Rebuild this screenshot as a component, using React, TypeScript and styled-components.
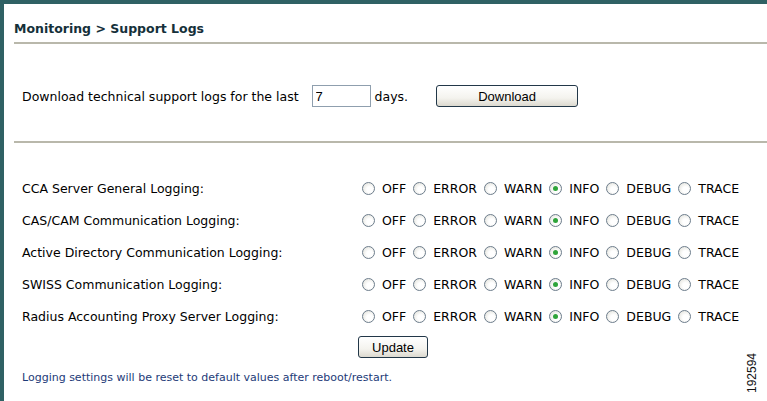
import { useState } from "react";
import styled, { createGlobalStyle } from "styled-components";

const GlobalStyle = createGlobalStyle`
  html, body {
    margin: 0;
    padding: 0;
    background: #ffffff;
  }
  body {
    font-family: "DejaVu Sans", Verdana, sans-serif;
    color: #000;
  }
`;

const LEVELS = ["OFF", "ERROR", "WARN", "INFO", "DEBUG", "TRACE"];

const LOGGERS = [
  "CCA Server General Logging:",
  "CAS/CAM Communication Logging:",
  "Active Directory Communication Logging:",
  "SWISS Communication Logging:",
  "Radius Accounting Proxy Server Logging:",
];

const Page = styled.div`
  position: relative;
  width: 767px;
  height: 401px;
  box-sizing: border-box;
  border-left: 4px solid #2f6164;
  border-top: 4px solid #2f6164;
  overflow: hidden;
`;

const Header = styled.div`
  margin-left: 10px;
  padding-top: 17px;
  padding-bottom: 5px;
  border-bottom: 2px solid #b9b8ab;
`;

const Title = styled.h1`
  margin: 0;
  font-size: 12.5px;
  font-weight: bold;
  color: #15303a;
  line-height: 16px;
`;

const Section = styled.div`
  margin-left: 10px;
  border-bottom: 2px solid #b9b8ab;
  padding: 41px 0 34px 8px;
`;

const DownloadRow = styled.div`
  display: flex;
  align-items: center;
  font-size: 12.5px;
  height: 22px;
`;

const DaysInput = styled.input`
  width: 59px;
  height: 22px;
  box-sizing: border-box;
  margin: 0 4px 0 13px;
  border: 1px solid #8f9fae;
  padding: 1px 3px;
  font-family: "Liberation Sans", Arial, sans-serif;
  font-size: 13px;
  outline: none;
`;

const Button = styled.button<{ $width: number }>`
  width: ${(p) => p.$width}px;
  height: 22px;
  box-sizing: border-box;
  border: 1px solid #223748;
  border-radius: 3px;
  background: linear-gradient(#ffffff, #f4f3ee 60%, #dcd9cf);
  font-family: "Liberation Sans", Arial, sans-serif;
  font-size: 13px;
  color: #000;
  padding: 0;
`;

const DownloadButton = styled(Button)`
  margin-left: 28px;
`;

const Loggers = styled.div`
  margin-left: 10px;
  padding: 36px 0 0 8px;
  display: flex;
  flex-direction: column;
  gap: 14px;
`;

const LoggerRow = styled.div`
  display: flex;
  align-items: center;
  height: 18px;
  font-size: 12.5px;
`;

const LoggerName = styled.span`
  width: 340px;
`;

const Choices = styled.div`
  display: flex;
  align-items: center;
`;

const Choice = styled.label`
  display: flex;
  align-items: center;
  margin-right: 7px;
  cursor: pointer;
`;

const RadioDot = styled.span<{ $checked: boolean }>`
  width: 11px;
  height: 11px;
  border-radius: 50%;
  border: 1px solid #6d7d8c;
  background: radial-gradient(circle at 60% 60%, #ffffff 30%, #dcdcd4 100%);
  margin-right: 7px;
  display: flex;
  align-items: center;
  justify-content: center;
  &::after {
    content: "";
    width: 5px;
    height: 5px;
    border-radius: 50%;
    background: ${(p) => (p.$checked ? "#2fa43a" : "transparent")};
  }
`;

const ChoiceText = styled.span`
  font-size: 12.5px;
`;

const UpdateRow = styled.div`
  display: flex;
  margin: 11px 0 0 354px;
`;

const Note = styled.div`
  margin: 13px 0 0 18px;
  font-size: 11px;
  color: #1d3b78;
`;

const FigureId = styled.div`
  position: absolute;
  right: 8px;
  bottom: 8px;
  writing-mode: vertical-rl;
  transform: rotate(180deg);
  font-family: "Liberation Sans", Arial, sans-serif;
  font-size: 12px;
  color: #111;
`;

export default function App() {
  const [days, setDays] = useState("7");
  const [levels, setLevels] = useState<string[]>(LOGGERS.map(() => "INFO"));

  const pick = (i: number, level: string) => {
    setLevels((prev) => prev.map((l, j) => (j === i ? level : l)));
  };

  return (
    <>
      <GlobalStyle />
      <Page>
        <Header>
          <Title>Monitoring &gt; Support Logs</Title>
        </Header>
        <Section>
          <DownloadRow>
            Download technical support logs for the last
            <DaysInput value={days} onChange={(e) => setDays(e.target.value)} />
            days.
            <DownloadButton $width={142}>Download</DownloadButton>
          </DownloadRow>
        </Section>
        <Loggers>
          {LOGGERS.map((name, i) => (
            <LoggerRow key={name}>
              <LoggerName>{name}</LoggerName>
              <Choices>
                {LEVELS.map((level) => (
                  <Choice key={level} onClick={() => pick(i, level)}>
                    <RadioDot $checked={levels[i] === level} />
                    <ChoiceText>{level}</ChoiceText>
                  </Choice>
                ))}
              </Choices>
            </LoggerRow>
          ))}
        </Loggers>
        <UpdateRow>
          <Button $width={70}>Update</Button>
        </UpdateRow>
        <Note>Logging settings will be reset to default values after reboot/restart.</Note>
        <FigureId>192594</FigureId>
      </Page>
    </>
  );
}
